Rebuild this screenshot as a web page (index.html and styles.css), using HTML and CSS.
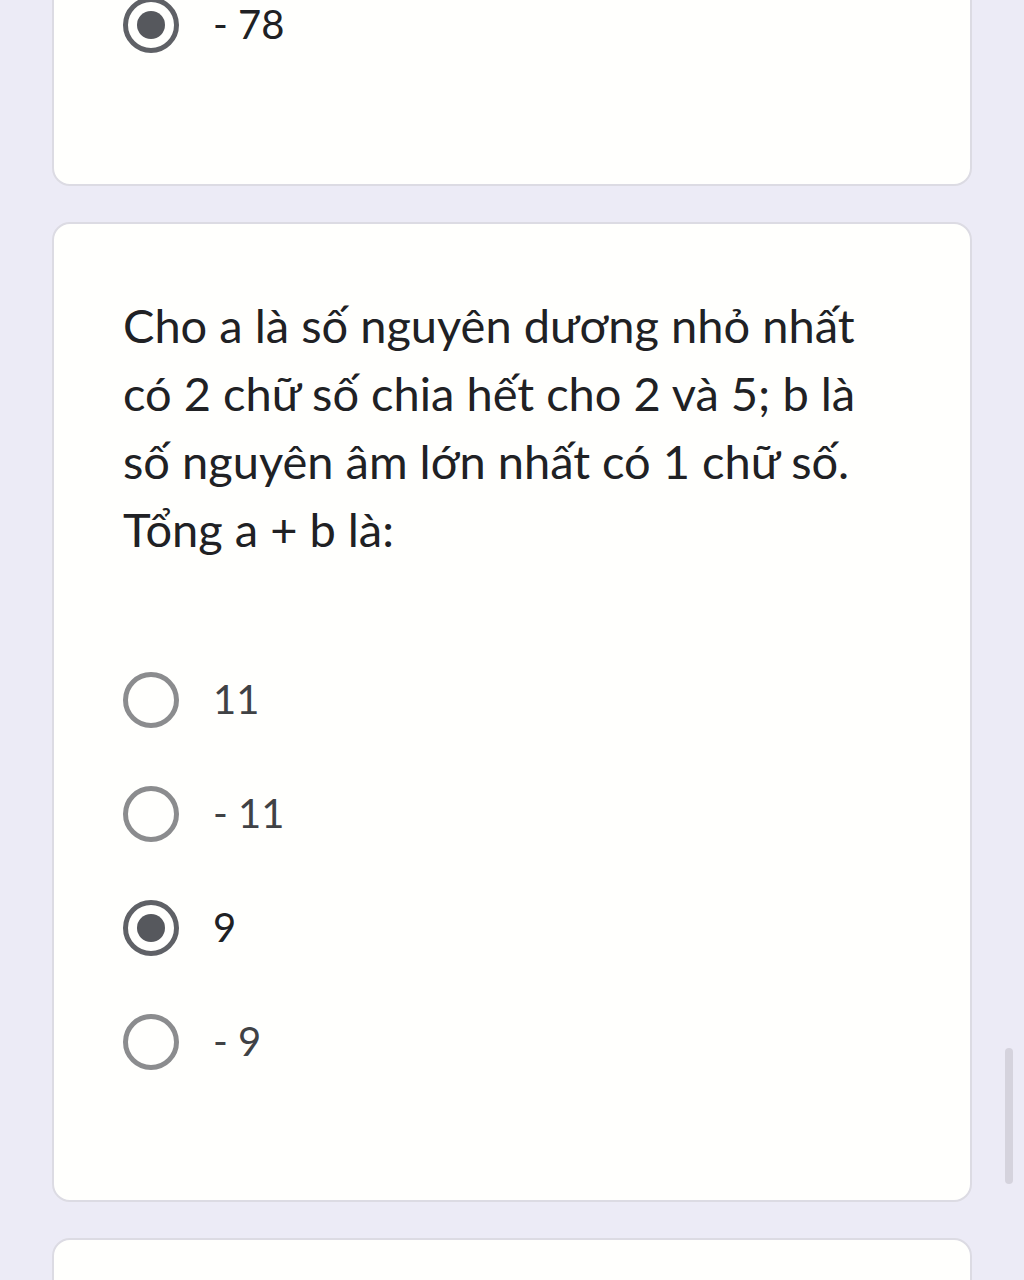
FILE: index.html
```html
<!DOCTYPE html>
<html lang="vi">
<head>
	<meta charset="UTF-8">
	<title>Bài kiểm tra</title>
	<link rel="stylesheet" href="styles.css">
</head>
<body>
	<div class="card card-prev">
		<div class="opt checked">
			<span class="radio"></span>
			<span class="label">- 78</span>
		</div>
	</div>

	<div class="card card-main">
		<div class="question">Cho a là số nguyên dương nhỏ nhất<br>có 2 chữ số chia hết cho 2 và 5; b là<br>số nguyên âm lớn nhất có 1 chữ số.<br>Tổng a + b là:</div>
		<div class="opts">
			<div class="opt">
				<span class="radio"></span>
				<span class="label">11</span>
			</div>
			<div class="opt">
				<span class="radio"></span>
				<span class="label">- 11</span>
			</div>
			<div class="opt checked">
				<span class="radio"></span>
				<span class="label">9</span>
			</div>
			<div class="opt">
				<span class="radio"></span>
				<span class="label">- 9</span>
			</div>
		</div>
	</div>

	<div class="card card-next"></div>

	<div class="scrollbar"></div>
</body>
</html>
```

FILE: styles.css
```css
html, body { margin: 0;padding: 0;height: 1280px;overflow: hidden; }
body { background: #ecebf6;font-family: Lato, "Noto Sans", Arial, sans-serif;color: #202124;position: relative; }
.card { background: #fffffd;border: 2px solid #dcdbe3;border-radius: 18px;margin: 0 52px 36px 52px;box-sizing: border-box; }
.card-prev { margin-top: -60px;padding: 26px 0 0 69px;height: 246px; }
.card-main { padding: 67px 69px 100px 69px;height: 980px; }
.card-next { height: 60px;margin-bottom: 0; }
.question { font-size: 47px;line-height: 68px;white-space: nowrap; }
.opts { margin-top: 80px; }
.opt { display: flex;align-items: center;height: 114px; }
.radio { width: 56px;height: 56px;border: 5px solid #8b8c8e;border-radius: 50%;box-sizing: border-box;position: relative;flex: none; }
.label { margin-left: 34px;font-size: 40px;color: #404245;position: relative;top: -1px; }
.checked .radio { border-color: #5f6166; }
.checked .radio::after { content: "";position: absolute;left: 9px;top: 9px;width: 28px;height: 28px;border-radius: 50%;background: #56585d; }
.checked .label { color: #202124; }
.scrollbar { position: absolute;left: 1005px;top: 1048px;width: 8px;height: 136px;border-radius: 4px;background: #d5d3dd; }
```
